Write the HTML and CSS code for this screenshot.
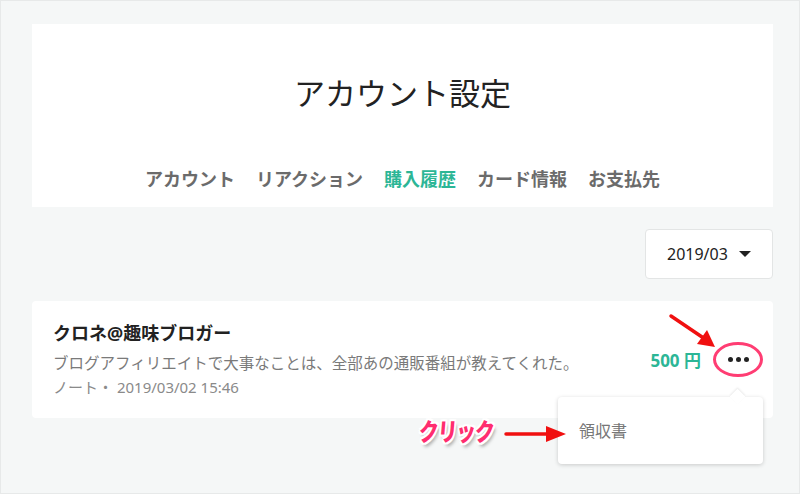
FILE: index.html
```html
<!DOCTYPE html>
<html lang="ja">
  <head>
    <meta charset="UTF-8" />
    <meta name="viewport" content="width=device-width, initial-scale=1.0" />
    <title>アカウント設定</title>
    <link rel="stylesheet" href="styles.css">
  </head>
  <body>
    <div class="page">
      <div class="header-card">
        <h1>アカウント設定</h1>
        <nav class="tabs">
          <a>アカウント</a>
          <a>リアクション</a>
          <a class="active">購入履歴</a>
          <a>カード情報</a>
          <a>お支払先</a>
        </nav>
      </div>

      <div class="filter">
        <div class="month-select">
          <span>2019/03</span>
          <span class="caret"></span>
        </div>
      </div>

      <div class="item-card">
        <div class="item-body">
          <div class="item-title">クロネ@趣味ブロガー</div>
          <div class="item-desc">ブログアフィリエイトで大事なことは、全部あの通販番組が教えてくれた。</div>
          <div class="item-meta">ノート・ 2019/03/02 15:46</div>
        </div>
        <div class="item-price">500 円</div>
        <div class="more">
          <button class="more-btn"><i></i><i></i><i></i></button>
          <span class="ring"></span>
          <div class="menu">
            <div class="menu-item">領収書</div>
          </div>
        </div>
      </div>

      <!-- annotations -->
      <svg class="arrow-top" width="60" height="45" viewBox="0 0 60 45">
        <line x1="4" y1="4" x2="38" y2="27" stroke="#f01010" stroke-width="3.5" stroke-linecap="round" />
        <polygon points="48,35 30,32 40,18" fill="#f01010" />
      </svg>
      <div class="click-label">クリック</div>
      <svg class="arrow-click" width="66" height="20" viewBox="0 0 66 20">
        <line x1="2" y1="10" x2="46" y2="10" stroke="#f01010" stroke-width="3.5" stroke-linecap="round" />
        <polygon points="62,10 42,2 42,18" fill="#f01010" />
      </svg>
    </div>
  </body>
</html>
```

FILE: styles.css
```css
* {
  box-sizing: border-box;
}
body {
  margin: 0;
  background-color: #ffffff;
  font-family: "Noto Sans", "Noto Sans CJK JP", sans-serif;
}
.page {
  position: relative;
  width: 800px;
  height: 494px;
  padding: 23px 26px 0 31px;
  background-color: #f5f7f7;
  border: 1px solid #e7e9e9;
  overflow: hidden;
}
.header-card {
  background-color: #ffffff;
  height: 183px;
  padding-top: 47px;
  text-align: center;
}
h1 {
  margin: 0;
  font-size: 31px;
  font-weight: 400;
  line-height: 45px;
  color: #222222;
}
.tabs {
  display: flex;
  justify-content: center;
  gap: 21px;
  margin-top: 50px;
}
.tabs a {
  font-size: 18px;
  font-weight: 700;
  line-height: 27px;
  color: #6b6b6b;
}
.tabs a.active {
  color: #2cb696;
}
.filter {
  display: flex;
  justify-content: flex-end;
  margin-top: 22px;
}
.month-select {
  display: flex;
  align-items: center;
  justify-content: space-between;
  width: 128px;
  height: 50px;
  padding: 0 21px;
  background-color: #ffffff;
  border: 1px solid #e3e5e5;
  border-radius: 4px;
  font-size: 16px;
  color: #222222;
}
.caret {
  width: 0;
  height: 0;
  border-left: 6px solid transparent;
  border-right: 6px solid transparent;
  border-top: 6px solid #222222;
}
.item-card {
  display: flex;
  align-items: center;
  margin-top: 22px;
  padding: 19px 17px 19px 21px;
  background-color: #ffffff;
  border-radius: 4px;
}
.item-body {
  flex: 1;
}
.item-title {
  font-size: 18px;
  font-weight: 700;
  line-height: 26px;
  color: #222222;
}
.item-desc {
  margin-top: 5px;
  font-size: 15.5px;
  line-height: 24px;
  color: #7a7a7a;
}
.item-meta {
  font-size: 15px;
  line-height: 24px;
  color: #8a8a8a;
}
.item-price {
  font-size: 17px;
  font-weight: 700;
  color: #2cb696;
  margin-right: 19px;
}
.more {
  position: relative;
}
.more-btn {
  display: flex;
  align-items: center;
  justify-content: center;
  gap: 3px;
  width: 36px;
  height: 36px;
  padding: 0;
  border: none;
  background: none;
}
.more-btn i {
  width: 5px;
  height: 5px;
  border-radius: 50%;
  background-color: #222222;
}
.ring {
  position: absolute;
  left: -7px;
  top: 0;
  width: 50px;
  height: 35px;
  border: 3px solid #ff3d73;
  border-radius: 50%;
}
.menu {
  position: absolute;
  top: 55px;
  right: -7px;
  width: 205px;
  height: 67px;
  padding: 0 21px;
  display: flex;
  align-items: center;
  background-color: #ffffff;
  border-radius: 4px;
  box-shadow: 0 1px 4px rgba(0, 0, 0, 0.18);
}
.menu::before {
  content: "";
  position: absolute;
  top: -6px;
  right: 20px;
  width: 11px;
  height: 11px;
  background-color: #ffffff;
  transform: rotate(45deg);
  box-shadow: -1px -1px 2px rgba(0, 0, 0, 0.08);
}
.menu-item {
  position: relative;
  font-size: 16px;
  color: #777777;
}
.arrow-top {
  position: absolute;
  left: 666px;
  top: 311px;
}
.click-label {
  position: absolute;
  left: 418px;
  top: 413px;
  font-size: 25px;
  font-weight: 900;
  line-height: 34px;
  letter-spacing: -1px;
  color: #ff2d6f;
  transform-origin: left center;
  transform: scaleX(0.78) skewX(-6deg);
  text-shadow: 2px 0 0 #fff, -2px 0 0 #fff, 0 2px 0 #fff, 0 -2px 0 #fff,
    2px 2px 0 #fff, -2px -2px 0 #fff, 2px -2px 0 #fff, -2px 2px 0 #fff,
    3px 4px 4px rgba(0, 0, 0, 0.35);
}
.arrow-click {
  position: absolute;
  left: 503px;
  top: 423px;
}
```
